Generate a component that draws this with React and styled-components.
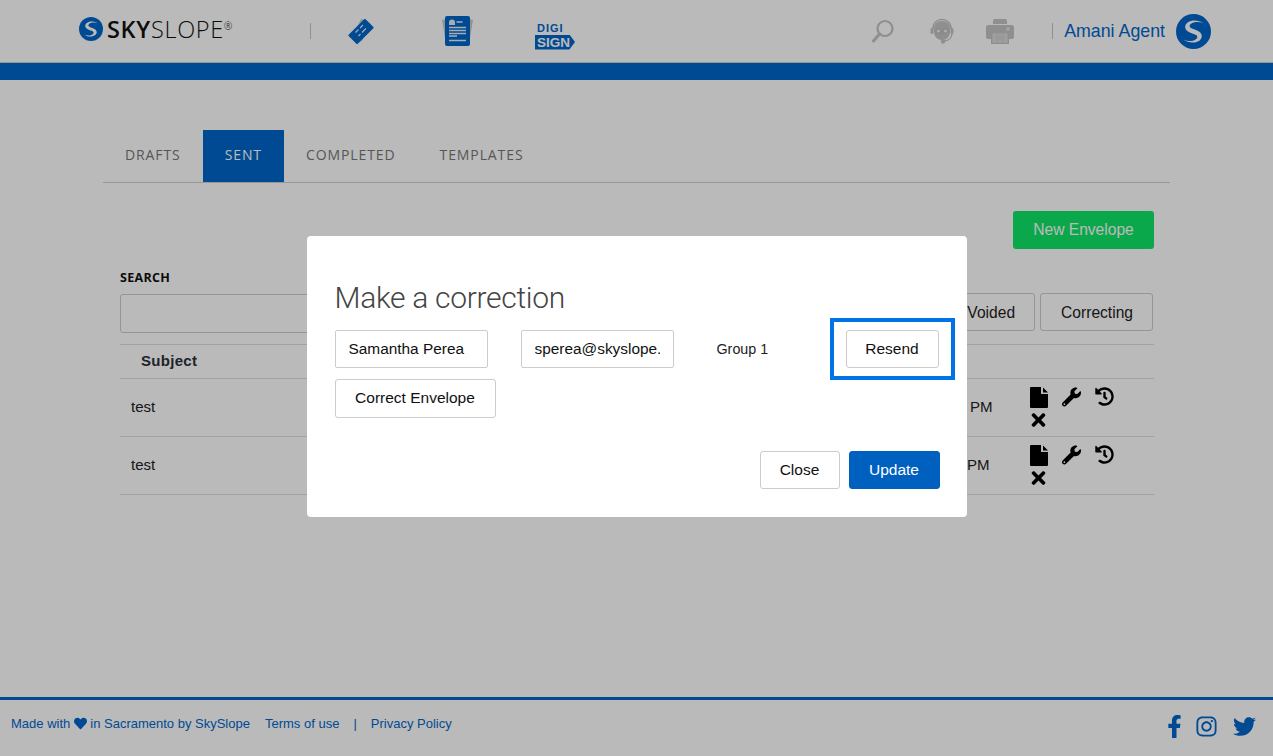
import React from "react";
import styled, { createGlobalStyle } from "styled-components";
import { FaWrench, FaHistory, FaTimes, FaHeart, FaFacebookF, FaInstagram, FaTwitter } from "react-icons/fa";

const GlobalStyle = createGlobalStyle`
  html, body {
    margin: 0;
    padding: 0;
    height: 100%;
    overflow: hidden;
    background: #fff;
    font-family: "Liberation Sans", Arial, sans-serif;
  }
  #root { height: 100%; }
  * { box-sizing: border-box; }
`;

const Page = styled.div`
  height: 756px;
  display: flex;
  flex-direction: column;
`;

const Header = styled.header`
  height: 63px;
  display: flex;
  align-items: center;
  justify-content: space-between;
  padding: 0 62px 0 79px;
  border-bottom: 1px solid #d0d0d0;
`;

const NavGroup = styled.div`
  display: flex;
  align-items: center;
`;

const LogoLink = styled.div`
  display: flex;
  align-items: center;
  gap: 4px;
  margin-top: -5px;
  width: 231px;
`;

const LogoText = styled.span`
  font-family: "Open Sans", sans-serif;
  font-size: 23.5px;
  font-weight: 300;
  letter-spacing: 0.7px;
  color: #111;
  b { font-weight: 600; }
  sup { font-size: 10px; vertical-align: 8px; line-height: 0; }
`;

const Separator = styled.span`
  width: 1px;
  height: 16px;
  background: #c4c4c4;
`;

const NavIcon = styled.div`
  display: flex;
  margin-left: ${(props) => props.$left}px;
`;

const DigiSign = styled.div`
  margin-left: ${(props) => props.$left}px;
  padding-top: 10px;
  display: flex;
  flex-direction: column;
  align-items: flex-start;
  font-weight: 700;
  color: #0066cb;
  line-height: 1;
`;

const DigiTop = styled.span`
  font-size: 11px;
  letter-spacing: 1px;
  margin: 0 0 1px 2px;
`;

const DigiBottom = styled.span`
  width: 40px;
  height: 15px;
  padding-left: 2px;
  background: #0066cb;
  color: #fff;
  font-size: 13.5px;
  line-height: 15px;
  clip-path: polygon(0 0, 86% 0, 100% 50%, 86% 100%, 0 100%);
`;

const UserName = styled.span`
  margin-left: 11px;
  font-size: 17.8px;
  color: #0066cb;
`;

const Avatar = styled.div`
  display: flex;
  margin-left: 11px;
`;

const BlueBar = styled.div`
  height: 17px;
  background: #0066cb;
`;

const Main = styled.main`
  margin: 50px 103px 0;
  flex: 1;
`;

const Tabs = styled.nav`
  display: flex;
  height: 53px;
  border-bottom: 1px solid #d0d0d0;
`;

const Tab = styled.a`
  display: flex;
  align-items: center;
  padding: 0 22px 3px;
  font-family: "Open Sans", sans-serif;
  font-size: 14px;
  letter-spacing: 0.9px;
  color: ${(props) => (props.$active ? "#fff" : "#777")};
  background: ${(props) => (props.$active ? "#0066cb" : "transparent")};
`;

const Content = styled.section`
  padding: 28px 16px 0 17px;
`;

const ActionRow = styled.div`
  display: flex;
  justify-content: flex-end;
`;

const NewButton = styled.button`
  width: 141px;
  height: 38px;
  padding: 0 0 1px;
  border: 0;
  border-radius: 3px;
  background: #0ee667;
  color: #fff;
  font: 15.6px "Liberation Sans", Arial, sans-serif;
`;

const FilterRow = styled.div`
  display: flex;
  justify-content: space-between;
  align-items: flex-end;
  margin-top: 21px;
`;

const SearchBlock = styled.div`
  display: flex;
  flex-direction: column;
`;

const SearchLabel = styled.label`
  font-family: "Open Sans", sans-serif;
  font-size: 12.5px;
  font-weight: 700;
  letter-spacing: 0.3px;
  color: #111;
  margin-bottom: 9px;
  line-height: 15px;
`;

const SearchInput = styled.input`
  width: 420px;
  height: 39px;
  border: 1px solid #ccc;
  border-radius: 3px;
  background: #fff;
`;

const Filters = styled.div`
  display: flex;
  gap: 5px;
  margin: 0 1px 2px 0;
`;

const FilterButton = styled.button`
  height: 38px;
  padding: 1px 19px 0 20px;
  border: 1px solid #ccc;
  border-radius: 3px;
  background: #fff;
  color: #222;
  font: 15.6px "Liberation Sans", Arial, sans-serif;
`;

const Table = styled.div`
  margin-top: 11px;
  border-top: 1px solid #ddd;
`;

const HeadRow = styled.div`
  height: 34px;
  padding: 0 0 2px 21px;
  display: flex;
  align-items: center;
  border-bottom: 1px solid #ddd;
  font-size: 15px;
  font-weight: 700;
  letter-spacing: 0.3px;
  color: #2c3138;
`;

const Row = styled.div`
  height: 58px;
  display: flex;
  border-bottom: 1px solid #ddd;
  font-size: 15px;
  color: #222;
`;

const SubjectCell = styled.div`
  flex: 1;
  padding: 0 0 2px 11px;
  align-self: center;
`;

const TimeCell = styled.div`
  width: 62px;
  padding: 0 0 2px ${(props) => props.$indent}px;
  align-self: center;
`;

const Actions = styled.div`
  width: 125px;
  display: flex;
  flex-wrap: wrap;
  align-content: flex-start;
  gap: 1px 14px;
  padding: 8px 20px 0 0;
  color: #000;
`;

const ActionIcon = styled.span`
  width: 19px;
  height: 21px;
  display: flex;
  font-size: ${(props) => props.$size || 20}px;
  align-items: ${(props) => (props.$top ? "flex-start" : "center")};
  justify-content: center;
`;

const Footer = styled.footer`
  height: 59px;
  display: flex;
  align-items: center;
  justify-content: space-between;
  padding: 0 17px 10px 11px;
  border-top: 3px solid #0066cb;
  color: #0066cb;
  font-size: 13px;
`;

const FooterLinks = styled.div`
  display: flex;
  align-items: center;
`;

const FooterText = styled.span`
  margin-left: ${(props) => props.$left || 0}px;
  display: flex;
  align-items: center;
  gap: 3.5px;
`;

const Social = styled.div`
  display: flex;
  align-items: center;
  font-size: 23px;
  padding-top: 6px;
  svg { display: block; }
`;

const SocialIcon = styled.span`
  margin-left: ${(props) => props.$left || 0}px;
`;

const Overlay = styled.div`
  position: fixed;
  inset: 0;
  display: flex;
  justify-content: center;
  align-items: flex-start;
  padding-top: 236px;
  background: rgba(0, 0, 0, 0.27);
`;

const Modal = styled.div`
  width: 660px;
  height: 281px;
  padding: 43px 27px 0 28px;
  display: flex;
  flex-direction: column;
  background: #fff;
  border-radius: 4px;
`;

const ModalTitle = styled.h2`
  margin: 0;
  font-family: "Roboto", sans-serif;
  font-size: 30px;
  font-weight: 300;
  letter-spacing: -0.3px;
  line-height: 38px;
  color: #444;
`;

const RecipientRow = styled.div`
  display: flex;
  align-items: center;
  gap: 33px;
  margin-top: 13px;
`;

const RecipientInput = styled.input`
  width: 153px;
  height: 38px;
  padding: 0 13px 1px;
  border: 1px solid #ccc;
  border-radius: 2px;
  color: #111;
  font: 15.4px "Liberation Sans", Arial, sans-serif;
`;

const GroupLabel = styled.span`
  width: 139px;
  padding-left: 10px;
  font-size: 14.3px;
  color: #222;
`;

const ResendWrap = styled.div`
  position: relative;
  display: flex;
  margin-left: -33px;
`;

const Highlight = styled.div`
  position: absolute;
  inset: -12px -16px;
  border: 4px solid #0073e6;
`;

const ModalButton = styled.button`
  height: ${(props) => props.$height || 38}px;
  width: ${(props) => props.$width}px;
  border: 1px solid ${(props) => (props.$primary ? "#0060c0" : "#ccc")};
  border-radius: 3px;
  background: ${(props) => (props.$primary ? "#0060c0" : "#fff")};
  color: ${(props) => (props.$primary ? "#fff" : "#111")};
  font: 15.5px "Liberation Sans", Arial, sans-serif;
  padding: 0 0 1px;
`;

const CorrectRow = styled.div`
  margin-top: 11px;
`;

const ModalFooter = styled.div`
  display: flex;
  justify-content: flex-end;
  gap: 9px;
  margin-top: 33px;
`;

const SwooshMark = ({ size }) => (
  <svg width={size} height={size} viewBox="0 0 36 36">
    <circle cx="18" cy="18" r="18" fill="#0066cb" />
    <path
      d="M28 9.500C21 4.500 9.500 6.500 9.500 13.500c0 5 7.500 6 11 8 2.500 1.500 2.500 4 0 6 4.500-.5 6.500-3.500 5-6.500-2-4-10-4-11.500-7.500C13 9.500 21 6.500 28 9.500z"
      fill="#fff"
    />
    <path
      d="M28 9.500C21 4.500 9.500 6.500 9.500 13.500c0 5 7.500 6 11 8 2.500 1.500 2.500 4 0 6 4.500-.5 6.500-3.500 5-6.500-2-4-10-4-11.500-7.500C13 9.500 21 6.500 28 9.500z"
      fill="#fff"
      transform="rotate(180 18 18)"
    />
  </svg>
);

const TagIcon = () => (
  <svg width="28" height="28" viewBox="0 0 28 28">
    <rect x="4" y="8" width="20" height="11" fill="#c9c9c9" transform="rotate(-62 14 13)" />
    <rect x="2" y="8" width="24" height="13" rx="1" fill="#0066cb" transform="rotate(-45 14 14.500)" />
    <path d="M8.500 15.500l3-3M13 11l3-3M11.500 19l2-2M15 15.500l4-4" stroke="#e8eef6" strokeWidth="1.100" />
  </svg>
);

const DocIcon = () => (
  <svg width="31" height="30" viewBox="0 0 31 30">
    <path d="M0 4l4-1v25zM31 4l-4-1v25z" fill="#c9c9c9" />
    <rect x="3" y="0" width="25" height="30" rx="2" fill="#0066cb" />
    <path d="M7 9V6.500a3 3 0 0 1 6 0V9z" fill="#e8eef6" />
    <path d="M14.500 6h6" stroke="#e8eef6" strokeWidth="1.500" />
    <path d="M7 11.500h17M7 14.500h17M7 17.500h17M7 20h8M7 24.500h17" stroke="#e8eef6" strokeWidth="1.500" />
  </svg>
);

const SearchIcon = () => (
  <svg width="22" height="24" viewBox="0 0 22 24">
    <circle cx="13" cy="9.500" r="7.500" fill="none" stroke="#c4c4c4" strokeWidth="2.200" />
    <path d="M7.500 15L1.500 22" stroke="#c4c4c4" strokeWidth="3" strokeLinecap="round" />
  </svg>
);

const AgentIcon = () => (
  <svg width="24" height="26" viewBox="0 0 24 26">
    <path d="M3 11C3 5 7 1.500 12 1.500S21 5 21 11" fill="none" stroke="#c4c4c4" strokeWidth="1.600" />
    <path d="M12 3C7 3 4 6.500 4 11v3c0 4.500 3.500 8 8 8s8-3.500 8-8v-3c0-4.500-3-8-8-8z" fill="#c4c4c4" />
    <path d="M5.500 13c0-1.500 1.500-2.500 3.500-2.500 1.200 0 2.200.5 3 1 .8-.5 1.800-1 3-1 2 0 3.500 1 3.500 2.500 0 2-2 3.500-6.500 3.500S5.500 15 5.500 13z" fill="#bdbdbd" />
    <circle cx="8.500" cy="13" r="1.500" fill="#efefef" />
    <circle cx="15.500" cy="13" r="1.500" fill="#efefef" />
    <rect x="0.500" y="10" width="3" height="6" rx="1.500" fill="#c4c4c4" />
    <rect x="20.500" y="10" width="3" height="6" rx="1.500" fill="#c4c4c4" />
    <path d="M22 16c-.5 4-3.500 6.500-7.500 7" fill="none" stroke="#c4c4c4" strokeWidth="1.400" />
    <circle cx="13" cy="23.500" r="2.200" fill="#c4c4c4" />
  </svg>
);

const PrintIcon = () => (
  <svg width="28" height="25" viewBox="0 0 28 25">
    <path d="M7 5V1.500A1.500 1.500 0 0 1 8.500 0h11A1.500 1.500 0 0 1 21 1.500V5z" fill="#c4c4c4" />
    <rect x="0" y="6" width="28" height="14" rx="2.500" fill="#c4c4c4" />
    <rect x="20.500" y="8.500" width="3" height="3" fill="#e6e6e6" />
    <rect x="5" y="13" width="18" height="12" fill="#c4c4c4" />
    <rect x="6.500" y="14.500" width="15" height="9" fill="#dcdcdc" />
    <path d="M9 17h10M9 19h10M9 21h10" stroke="#c4c4c4" strokeWidth="0.900" />
  </svg>
);

const FileIcon = () => (
  <svg width="18" height="21" viewBox="0 0 18 21">
    <path d="M1 0h10v7h7v13a1 1 0 0 1-1 1H1a1 1 0 0 1-1-1V1a1 1 0 0 1 1-1zM13 0.500L18 5.500h-5z" fill="#000" />
  </svg>
);

const App = () => (
  <>
    <GlobalStyle />
    <Page>
      <Header>
        <NavGroup>
          <LogoLink>
            <SwooshMark size={24} />
            <LogoText>
              <b>SKY</b>SLOPE<sup>®</sup>
            </LogoText>
          </LogoLink>
          <Separator />
          <NavIcon $left={36}>
            <TagIcon />
          </NavIcon>
          <NavIcon $left={67}>
            <DocIcon />
          </NavIcon>
          <DigiSign $left={62}>
            <DigiTop>DIGI</DigiTop>
            <DigiBottom>SIGN</DigiBottom>
          </DigiSign>
        </NavGroup>
        <NavGroup>
          <NavIcon $left={0}>
            <SearchIcon />
          </NavIcon>
          <NavIcon $left={36}>
            <AgentIcon />
          </NavIcon>
          <NavIcon $left={32}>
            <PrintIcon />
          </NavIcon>
          <NavIcon $left={38}>
            <Separator />
          </NavIcon>
          <UserName>Amani Agent</UserName>
          <Avatar>
            <SwooshMark size={35} />
          </Avatar>
        </NavGroup>
      </Header>
      <BlueBar />
      <Main>
        <Tabs>
          <Tab>DRAFTS</Tab>
          <Tab $active>SENT</Tab>
          <Tab>COMPLETED</Tab>
          <Tab>TEMPLATES</Tab>
        </Tabs>
        <Content>
          <ActionRow>
            <NewButton>New Envelope</NewButton>
          </ActionRow>
          <FilterRow>
            <SearchBlock>
              <SearchLabel>SEARCH</SearchLabel>
              <SearchInput />
            </SearchBlock>
            <Filters>
              <FilterButton>Voided</FilterButton>
              <FilterButton>Correcting</FilterButton>
            </Filters>
          </FilterRow>
          <Table>
            <HeadRow>Subject</HeadRow>
            {[3, 0].map((indent, i) => (
              <Row key={i}>
                <SubjectCell>test</SubjectCell>
                <TimeCell $indent={indent}>PM</TimeCell>
                <Actions>
                  <ActionIcon>
                    <FileIcon />
                  </ActionIcon>
                  <ActionIcon $top>
                    <FaWrench />
                  </ActionIcon>
                  <ActionIcon $top $size={19}>
                    <FaHistory />
                  </ActionIcon>
                  <ActionIcon $size={20}>
                    <FaTimes />
                  </ActionIcon>
                </Actions>
              </Row>
            ))}
          </Table>
        </Content>
      </Main>
      <Footer>
        <FooterLinks>
          <FooterText>
            Made with <FaHeart size={13} /> in Sacramento by SkySlope
          </FooterText>
          <FooterText $left={15}>Terms of use</FooterText>
          <FooterText $left={14}>|</FooterText>
          <FooterText $left={14}>Privacy Policy</FooterText>
        </FooterLinks>
        <Social>
          <SocialIcon>
            <FaFacebookF />
          </SocialIcon>
          <SocialIcon $left={9}>
            <FaInstagram />
          </SocialIcon>
          <SocialIcon $left={15}>
            <FaTwitter />
          </SocialIcon>
        </Social>
      </Footer>
    </Page>
    <Overlay>
      <Modal>
        <ModalTitle>Make a correction</ModalTitle>
        <RecipientRow>
          <RecipientInput readOnly value="Samantha Perea" />
          <RecipientInput readOnly value="sperea@skyslope.com" />
          <GroupLabel>Group 1</GroupLabel>
          <ResendWrap>
            <ModalButton $width={93}>Resend</ModalButton>
            <Highlight />
          </ResendWrap>
        </RecipientRow>
        <CorrectRow>
          <ModalButton $width={161} $height={39}>
            Correct Envelope
          </ModalButton>
        </CorrectRow>
        <ModalFooter>
          <ModalButton $width={80}>Close</ModalButton>
          <ModalButton $width={91} $primary>
            Update
          </ModalButton>
        </ModalFooter>
      </Modal>
    </Overlay>
  </>
);

export default App;
